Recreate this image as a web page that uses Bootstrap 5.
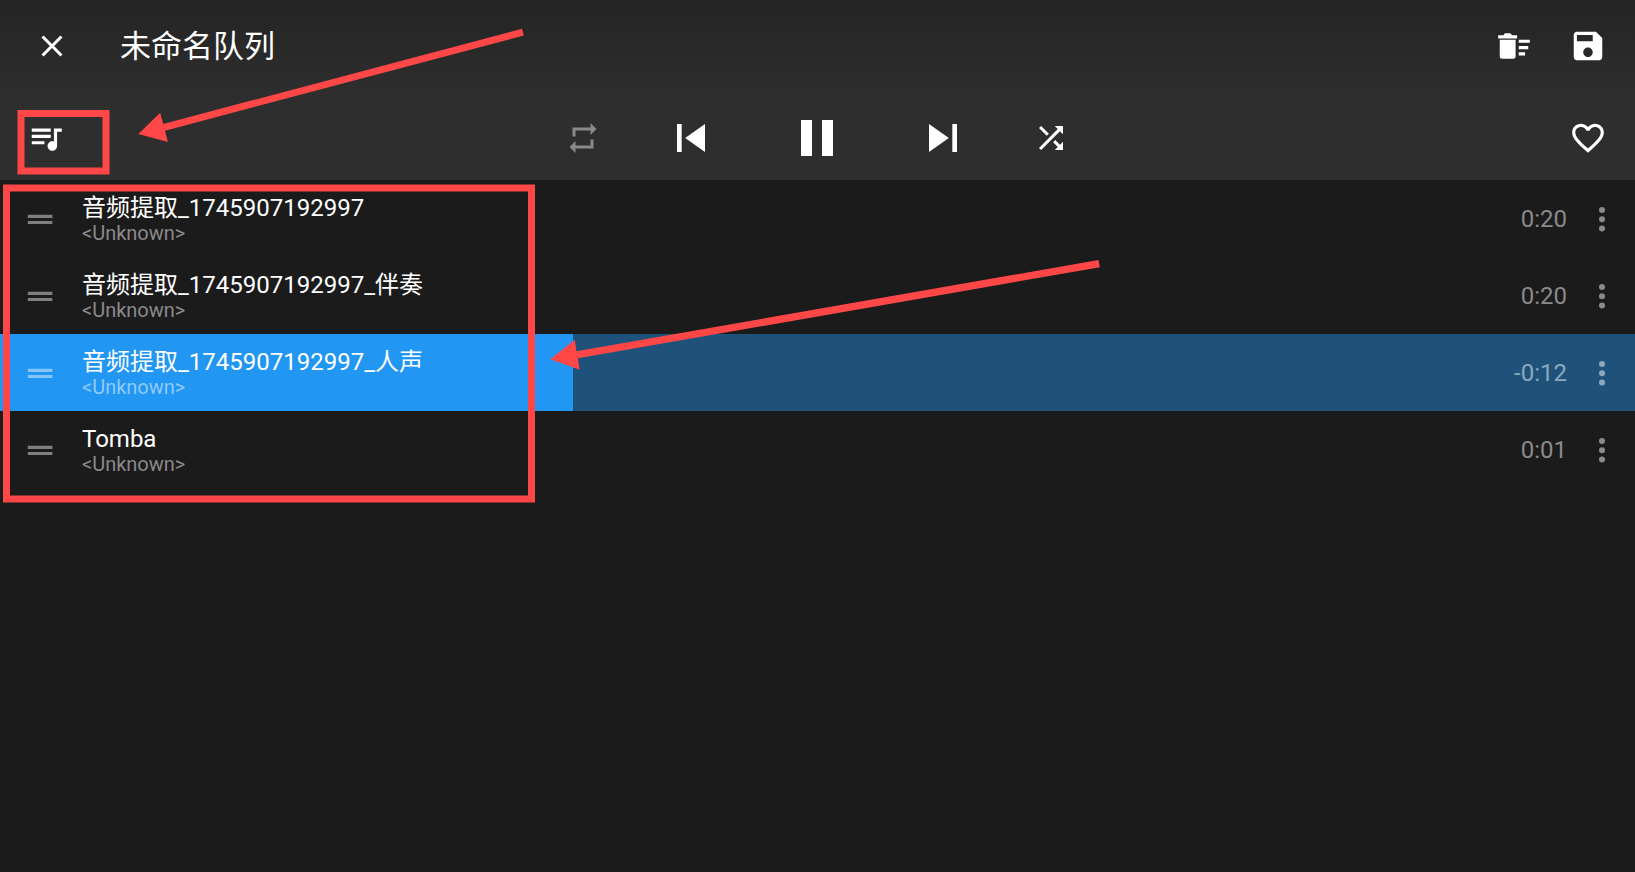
<!DOCTYPE html>
<html lang="zh-CN" data-bs-theme="dark">
<head>
<meta charset="utf-8">
<meta name="viewport" content="width=device-width, initial-scale=1">
<title>未命名队列</title>
<link href="https://cdn.jsdelivr.net/npm/bootstrap@5.3.0/dist/css/bootstrap.min.css" rel="stylesheet">
<style>
body { background: #1b1b1b; color: #fff; font-family: Roboto, "Noto Sans CJK SC", sans-serif; }
.player-head { background: linear-gradient(#242424, #2e2e2e 96px); }
.title-bar { height: 92px; padding: 0 28px 0 34px; }
.title-tools { gap: 36px; }
.control-bar { display: grid; grid-template-columns: 1fr auto 1fr; height: 88px; padding: 4px 28px 0 27px; }
.queue-name { font-size: 31px; line-height: 40px; font-weight: 400; margin-left: 50px; padding-top: 2px; }
.icon-btn { display: flex; align-items: center; justify-content: center; padding: 0; border: 0; background: none; color: inherit; }
.icon-btn svg { display: block; fill: currentColor; }
.w-mode { width: 92px; }
.w-skip { width: 124px; }
.w-play { width: 128px; }
.dimmed { color: #898989; }
.queue-row { height: 77px; padding: 0 14px 0 20px; color: #fff; --faint: #8a8a8a; }
.queue-row.playing { --faint: #90caf9; background: linear-gradient(#2196f3, #2196f3) left / var(--played) 100% no-repeat #1e527b; }
.queue-row.playing .track-side { --faint: #8ba9bd; }
.track-text { margin-left: 22px; padding-top: 1px; min-width: 0; }
.track-title { font-size: 24px; line-height: 28px; }
.track-artist { font-size: 20px; line-height: 22px; color: var(--faint); }
.track-side { color: var(--faint); gap: 16px; }
.track-time { font-size: 24px; line-height: 28px; padding-top: 1px; }
.grip { color: var(--faint); opacity: .9; }
.notes { pointer-events: none; fill: #ff4747; }
.notes rect { fill: none; stroke: #ff4747; stroke-width: 7; }
</style>
</head>
<body>
<div class="position-relative min-vh-100 overflow-hidden">
  <header class="player-head">
    <div class="title-bar d-flex align-items-center">
      <button class="icon-btn" type="button" aria-label="关闭"><svg width="36" height="36" viewBox="0 0 24 24"><path d="M19 6.4 17.6 5 12 10.6 6.4 5 5 6.4l5.6 5.6L5 17.6 6.4 19l5.6-5.6 5.6 5.6 1.4-1.4-5.6-5.6z"/></svg></button>
      <h1 class="queue-name mb-0">未命名队列</h1>
      <div class="title-tools d-flex ms-auto">
        <button class="icon-btn" type="button" aria-label="清空队列"><svg width="38" height="38" viewBox="0 0 24 24"><path d="M15 16h4v2h-4zm0-8h7v2h-7zm0 4h6v2h-6zM3 8h10v10.400Q13 20 11.400 20H4.600Q3 20 3 18.400zM2 5.200h3.400Q5.600 4 6.800 4h2.400Q10.400 4 10.600 5.200H14V7.200H2z"/></svg></button>
        <button class="icon-btn" type="button" aria-label="保存"><svg width="38" height="38" viewBox="0 0 24 24"><path d="M17 3H5c-1.100 0-2 .9-2 2v14c0 1.100.9 2 2 2h14c1.100 0 2-.9 2-2V7l-4-4zm-5 16c-1.660 0-3-1.340-3-3s1.340-3 3-3 3 1.340 3 3-1.340 3-3 3zm3-10H5V5h10v4z"/></svg></button>
      </div>
    </div>
    <div class="control-bar align-items-center">
      <button class="icon-btn me-auto" type="button" aria-label="播放队列"><svg width="38" height="38" viewBox="0 0 24 24"><path d="M15 6H3v2h12V6zm0 4H3v2h12v-2zM3 16h8v-2H3v2zM17 6v8.180c-.31-.11-.65-.18-1-.18-1.660 0-3 1.340-3 3s1.340 3 3 3 3-1.340 3-3V8h3V6h-5z"/></svg></button>
      <div class="d-flex align-items-center">
        <button class="icon-btn w-mode dimmed" type="button" aria-label="循环"><svg width="36" height="36" viewBox="0 0 24 24"><path d="M7 7h10v3l4-4-4-4v3H5v6h2V7zm10 10H7v-3l-4 4 4 4v-3h12v-6h-2v4z"/></svg></button>
        <button class="icon-btn w-skip" type="button" aria-label="上一首"><svg width="56" height="56" viewBox="0 0 24 24"><path d="M6 6h2v12H6zm3.500 6 8.500 6V6z"/></svg></button>
        <button class="icon-btn w-play" type="button" aria-label="暂停"><svg width="32" height="36" viewBox="0 0 32 36"><path d="M0 0h11v36H0zM21 0h11v36H21z"/></svg></button>
        <button class="icon-btn w-skip" type="button" aria-label="下一首"><svg width="56" height="56" viewBox="0 0 24 24"><path d="m6 18 8.500-6L6 6v12zM16 6v12h2V6h-2z"/></svg></button>
        <button class="icon-btn w-mode" type="button" aria-label="随机播放"><svg width="36" height="36" viewBox="0 0 24 24"><path d="M10.590 9.170 5.410 4 4 5.410l5.170 5.170 1.420-1.410zM14.500 4l2.040 2.040L4 18.590 5.410 20 17.960 7.460 20 9.500V4h-5.500zm.33 9.410-1.410 1.410 3.130 3.130L14.500 20H20v-5.500l-2.040 2.040-3.130-3.130z"/></svg></button>
      </div>
      <button class="icon-btn ms-auto" type="button" aria-label="收藏"><svg width="38" height="38" viewBox="0 0 24 24"><path d="M16.500 3c-1.740 0-3.410.81-4.500 2.090C10.910 3.810 9.240 3 7.500 3 4.420 3 2 5.420 2 8.500c0 3.780 3.400 6.860 8.550 11.540L12 21.350l1.450-1.320C18.600 15.360 22 12.280 22 8.500 22 5.420 19.580 3 16.500 3zm-4.400 15.550-.1.100-.1-.1C7.140 14.240 4 11.390 4 8.500 4 6.500 5.500 5 7.500 5c1.540 0 3.040.99 3.570 2.360h1.870C13.460 5.990 14.960 5 16.500 5c2 0 3.500 1.500 3.500 3.500 0 2.890-3.140 5.740-7.900 10.050z"/></svg></button>
    </div>
  </header>

  <main>
    <ul class="list-unstyled mb-0">
      <li class="queue-row d-flex align-items-center">
        <button class="icon-btn grip" type="button" aria-label="拖动"><svg width="40" height="40" viewBox="0 0 40 40"><path d="M7.800 15.800h24.600v3.100H7.800zM7.800 22h24.600v3.100H7.800z"/></svg></button>
        <div class="track-text"><div class="track-title text-truncate">音频提取_1745907192997</div><div class="track-artist">&lt;Unknown&gt;</div></div>
        <div class="track-side d-flex align-items-center ms-auto"><span class="track-time">0:20</span><button class="icon-btn" type="button" aria-label="更多"><svg width="38" height="38" viewBox="0 0 38 38"><circle cx="19" cy="10" r="3"/><circle cx="19" cy="19.200" r="3"/><circle cx="19" cy="28.400" r="3"/></svg></button></div>
      </li>
      <li class="queue-row d-flex align-items-center">
        <button class="icon-btn grip" type="button" aria-label="拖动"><svg width="40" height="40" viewBox="0 0 40 40"><path d="M7.800 15.800h24.600v3.100H7.800zM7.800 22h24.600v3.100H7.800z"/></svg></button>
        <div class="track-text"><div class="track-title text-truncate">音频提取_1745907192997_伴奏</div><div class="track-artist">&lt;Unknown&gt;</div></div>
        <div class="track-side d-flex align-items-center ms-auto"><span class="track-time">0:20</span><button class="icon-btn" type="button" aria-label="更多"><svg width="38" height="38" viewBox="0 0 38 38"><circle cx="19" cy="10" r="3"/><circle cx="19" cy="19.200" r="3"/><circle cx="19" cy="28.400" r="3"/></svg></button></div>
      </li>
      <li class="queue-row playing d-flex align-items-center" style="--played:35.05%">
        <button class="icon-btn grip" type="button" aria-label="拖动"><svg width="40" height="40" viewBox="0 0 40 40"><path d="M7.800 15.800h24.600v3.100H7.800zM7.800 22h24.600v3.100H7.800z"/></svg></button>
        <div class="track-text"><div class="track-title text-truncate">音频提取_1745907192997_人声</div><div class="track-artist">&lt;Unknown&gt;</div></div>
        <div class="track-side d-flex align-items-center ms-auto"><span class="track-time">-0:12</span><button class="icon-btn" type="button" aria-label="更多"><svg width="38" height="38" viewBox="0 0 38 38"><circle cx="19" cy="10" r="3"/><circle cx="19" cy="19.200" r="3"/><circle cx="19" cy="28.400" r="3"/></svg></button></div>
      </li>
      <li class="queue-row d-flex align-items-center">
        <button class="icon-btn grip" type="button" aria-label="拖动"><svg width="40" height="40" viewBox="0 0 40 40"><path d="M7.800 15.800h24.600v3.100H7.800zM7.800 22h24.600v3.100H7.800z"/></svg></button>
        <div class="track-text"><div class="track-title text-truncate">Tomba</div><div class="track-artist">&lt;Unknown&gt;</div></div>
        <div class="track-side d-flex align-items-center ms-auto"><span class="track-time">0:01</span><button class="icon-btn" type="button" aria-label="更多"><svg width="38" height="38" viewBox="0 0 38 38"><circle cx="19" cy="10" r="3"/><circle cx="19" cy="19.200" r="3"/><circle cx="19" cy="28.400" r="3"/></svg></button></div>
      </li>
    </ul>
  </main>

  <!-- Call-outs drawn over the player -->
  <svg class="notes position-absolute top-0 start-0" width="1110" height="510" viewBox="0 0 1110 510" aria-hidden="true">
    <rect x="21" y="113.500" width="85" height="57.500"/>
    <rect x="6.500" y="188" width="525" height="311"/>
    <path d="M138.300 134 160.200 112.700 163.200 124 522 28.700 523.800 35.500 165 130.700 167.900 142z"/>
    <path d="M550.300 359.300 574.800 339.700 576.400 351.200 1098.500 260 1099.900 267.200 577.800 358.300 579.700 369.700z"/>
  </svg>
</div>
<script src="https://cdn.jsdelivr.net/npm/bootstrap@5.3.0/dist/js/bootstrap.bundle.min.js"></script>
</body>
</html>
